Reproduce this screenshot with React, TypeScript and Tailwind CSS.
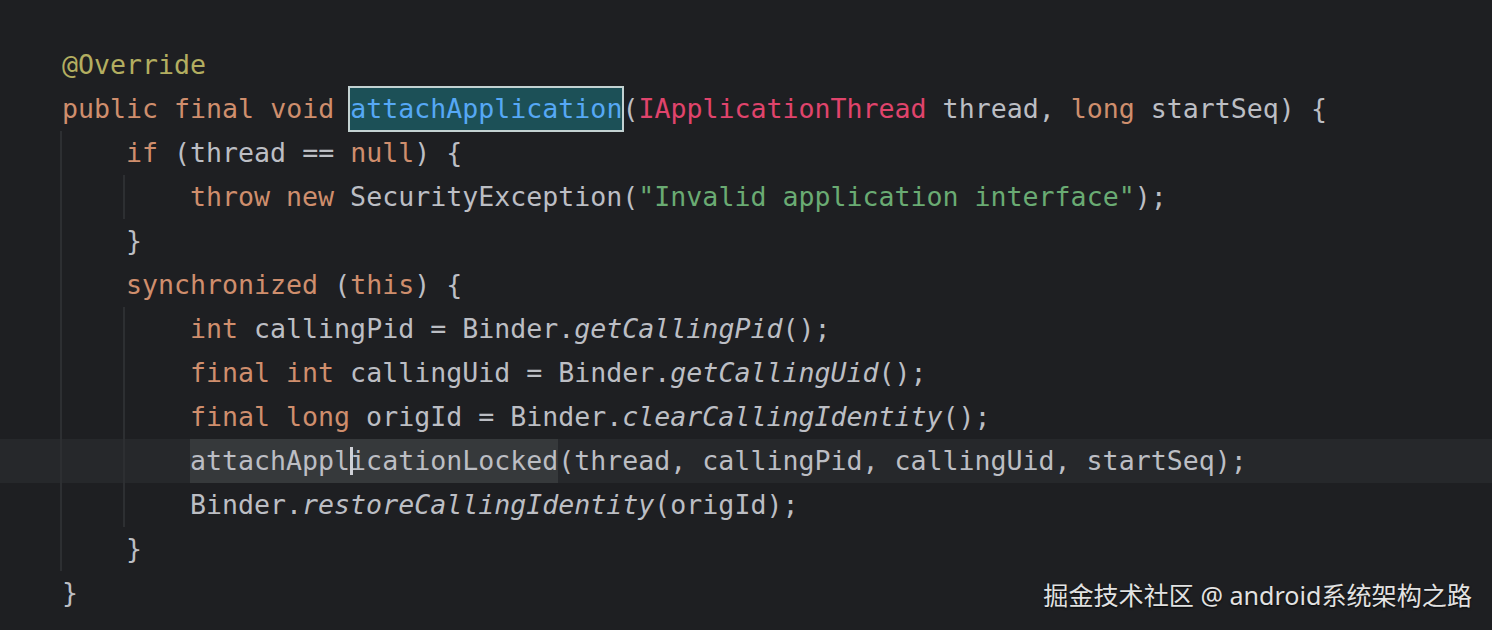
import React from 'react';

type Tok = { t: string; c?: string };

const KW = 'text-[#cf8e6d]';
const ANN = 'text-[#b3ae60]';
const STR = 'text-[#6aab73]';
const TYPE = 'text-[#e0446c]';
const STATIC = 'italic';

const indentClass = ['pl-[62px]', 'pl-[126px]', 'pl-[190px]'];

const Line: React.FC<{ level: number; current?: boolean; children: React.ReactNode }> = ({ level, current, children }) => (
    <div className={`h-[44px] flex items-center whitespace-pre ${indentClass[level]} ${current ? 'bg-[#26282b]' : ''}`}>
        {children}
    </div>
);

const Toks: React.FC<{ toks: Tok[] }> = ({ toks }) => (
    <>
        {toks.map((k, i) => (
            <span key={i} className={k.c}>{k.t}</span>
        ))}
    </>
);

const Guide: React.FC<{ className: string }> = ({ className }) => (
    <span className={`absolute w-[2px] bg-[#2d2f32] ${className}`} />
);

const App: React.FC = () => {
    return (
        <div className="relative w-full h-[630px] overflow-hidden bg-[#1e1f22] text-[#bcbec4] font-['DejaVu_Sans_Mono',monospace] text-[26.6px] leading-none">
            <div className="relative pt-[43px]">
                {/* indent guides */}
                <Guide className="left-[60px] top-[131px] h-[440px]" />
                <Guide className="left-[123px] top-[175px] h-[44px]" />
                <Guide className="left-[123px] top-[307px] h-[220px]" />

                <Line level={0}>
                    <Toks toks={[{ t: '@Override', c: ANN }]} />
                </Line>
                <Line level={0}>
                    <Toks toks={[{ t: 'public final void ', c: KW }]} />
                    <span className="inline-flex items-center h-[42px] bg-[#1c5057] outline-2 outline-[#c3d2d2] text-[#56a8f5]">attachApplication</span>
                    <Toks toks={[{ t: '(' }, { t: 'IApplicationThread', c: TYPE }, { t: ' thread, ' }, { t: 'long', c: KW }, { t: ' startSeq) {' }]} />
                </Line>
                <Line level={1}>
                    <Toks toks={[{ t: 'if', c: KW }, { t: ' (thread == ' }, { t: 'null', c: KW }, { t: ') {' }]} />
                </Line>
                <Line level={2}>
                    <Toks toks={[{ t: 'throw new', c: KW }, { t: ' SecurityException(' }, { t: '"Invalid application interface"', c: STR }, { t: ');' }]} />
                </Line>
                <Line level={1}>
                    <Toks toks={[{ t: '}' }]} />
                </Line>
                <Line level={1}>
                    <Toks toks={[{ t: 'synchronized', c: KW }, { t: ' (' }, { t: 'this', c: KW }, { t: ') {' }]} />
                </Line>
                <Line level={2}>
                    <Toks toks={[{ t: 'int', c: KW }, { t: ' callingPid = Binder.' }, { t: 'getCallingPid', c: STATIC }, { t: '();' }]} />
                </Line>
                <Line level={2}>
                    <Toks toks={[{ t: 'final int', c: KW }, { t: ' callingUid = Binder.' }, { t: 'getCallingUid', c: STATIC }, { t: '();' }]} />
                </Line>
                <Line level={2}>
                    <Toks toks={[{ t: 'final long', c: KW }, { t: ' origId = Binder.' }, { t: 'clearCallingIdentity', c: STATIC }, { t: '();' }]} />
                </Line>
                <Line level={2} current>
                    <span className="relative inline-flex items-center h-[44px] bg-[#36393b]">
                        attachAppl
                        <span className="absolute left-[160px] top-[8px] w-[3px] h-[28px] bg-[#ced0d6]" />
                        icationLocked
                    </span>
                    <Toks toks={[{ t: '(thread, callingPid, callingUid, startSeq);' }]} />
                </Line>
                <Line level={2}>
                    <Toks toks={[{ t: 'Binder.' }, { t: 'restoreCallingIdentity', c: STATIC }, { t: '(origId);' }]} />
                </Line>
                <Line level={1}>
                    <Toks toks={[{ t: '}' }]} />
                </Line>
                <Line level={0}>
                    <Toks toks={[{ t: '}' }]} />
                </Line>
            </div>

            {/* watermark */}
            <div className="absolute right-[20px] top-[579px] text-[25.1px] leading-[32px] text-[#e2e2e2] font-['Noto_Sans','Noto_Sans_CJK_SC',sans-serif] [text-shadow:0_1px_2px_rgba(0,0,0,0.8)] whitespace-pre">
                掘金技术社区 @ android系统架构之路
            </div>
        </div>
    );
};

export default App;
